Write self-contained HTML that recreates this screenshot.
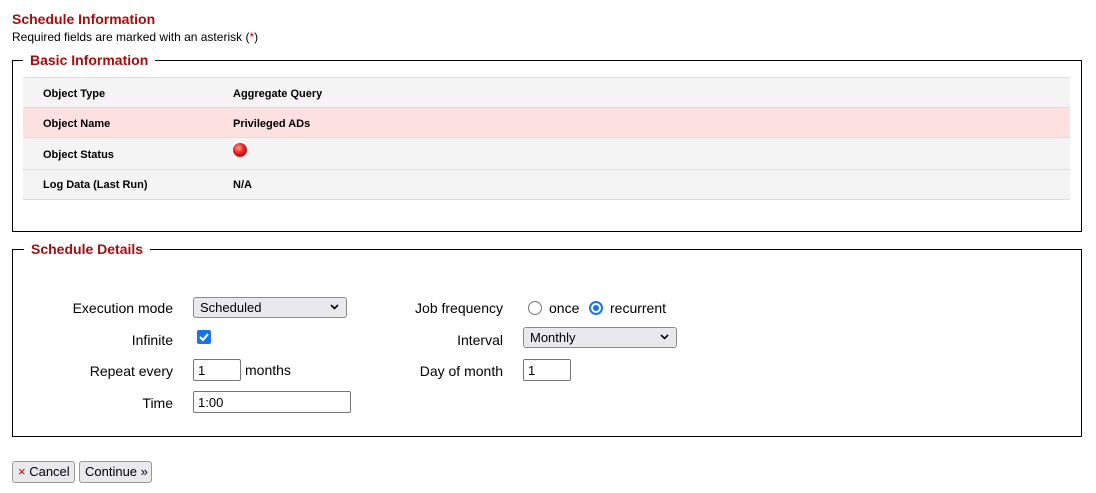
<!DOCTYPE html>
<html><head><meta charset="utf-8"><style>
*{box-sizing:border-box}
body{margin:0;width:1096px;height:493px;background:#fff;font-family:"Liberation Sans",Arial,sans-serif;color:#000;position:relative;overflow:hidden}
.a{position:absolute;white-space:nowrap}
.fs{position:absolute;border:1px solid #000;left:12px;width:1070px}
.lg{position:absolute;background:#fff;color:#a50d0d;font-weight:bold;font-size:14px;padding:0 7px;top:-10px;line-height:18px}
.row{position:absolute;left:23px;width:1047px;border-bottom:1px solid #ddd;font-size:11px;font-weight:bold}
.row span{position:absolute}
.lab{position:absolute;font-size:14px;text-align:right;width:200px}
.sel{position:absolute;height:21px;border:1px solid #8a8a8a;border-radius:3px;background:#e9e9ed;font-size:13px;padding:2px 6px;line-height:15px}
.sel svg{position:absolute;right:7px;top:6px}
.inp{position:absolute;height:22px;border:1px solid #767676;border-radius:2px;background:#fff;font-size:13px;padding:3px 4px;line-height:15px}
.btn{position:absolute;top:461px;height:22px;border:1px solid #999;border-radius:3px;background:#e9e9ed;font-size:13px;line-height:20px;padding:0 5px;white-space:nowrap}
</style></head><body>
<div class="a" style="left:12px;top:11px;font-size:14px;font-weight:bold;color:#a50d0d">Schedule Information</div>
<div class="a" style="left:12px;top:30px;font-size:12px">Required fields are marked with an asterisk (<span style="color:#a50d0d">*</span>)</div>

<div class="fs" style="top:60px;height:172px">
<div class="lg" style="left:10px">Basic Information</div>
</div>
<div class="row" style="top:77px;height:31px;background:#f4f4f4;border-top:1px solid #ddd"><span style="left:20px;top:10px">Object Type</span><span style="left:210px;top:10px">Aggregate Query</span></div>
<div class="row" style="top:108px;height:30px;background:#fde0e0"><span style="left:20px;top:10px">Object Name</span><span style="left:210px;top:10px">Privileged ADs</span></div>
<div class="row" style="top:138px;height:32px;background:#f4f4f4"><span style="left:20px;top:11px">Object Status</span><span style="left:210px;top:5px;width:14px;height:14px;border-radius:50%;background:radial-gradient(circle at 40% 35%,#ff9a8a 0,#e02020 45%,#900 100%)"></span></div>
<div class="row" style="top:170px;height:30px;background:#f4f4f4"><span style="left:20px;top:9px">Log Data (Last Run)</span><span style="left:210px;top:9px">N/A</span></div>

<div class="fs" style="top:249px;height:188px">
<div class="lg" style="left:11px">Schedule Details</div>
</div>

<div class="lab" style="left:-27px;top:300px">Execution mode</div>
<div class="sel" style="left:193px;top:297px;width:154px">Scheduled<svg width="9" height="6"><path d="M1 1l3.5 3.5L8 1" stroke="#000" stroke-width="1.6" fill="none"/></svg></div>
<div class="lab" style="left:-27px;top:332px">Infinite</div>
<div class="a" style="left:197px;top:330px;width:14px;height:14px;background:#1a73e8;border-radius:2px"><svg width="14" height="14"><path d="M3 7l3 3 5-6" stroke="#fff" stroke-width="2" fill="none"/></svg></div>
<div class="lab" style="left:-27px;top:363px">Repeat every</div>
<div class="inp" style="left:193px;top:359px;width:48px">1</div>
<div class="a" style="left:245px;top:362px;font-size:14px">months</div>
<div class="lab" style="left:-27px;top:395px">Time</div>
<div class="inp" style="left:193px;top:391px;width:158px">1:00</div>

<div class="lab" style="left:303px;top:300px">Job frequency</div>
<div class="a" style="left:528px;top:301px;width:14px;height:14px;border:1.5px solid #767676;border-radius:50%"></div>
<div class="a" style="left:549px;top:300px;font-size:14px">once</div>
<div class="a" style="left:589px;top:301px;width:14px;height:14px;border:2px solid #1a73e8;border-radius:50%"><div style="margin:2px;width:6px;height:6px;border-radius:50%;background:#1a73e8"></div></div>
<div class="a" style="left:610px;top:300px;font-size:14px">recurrent</div>
<div class="lab" style="left:303px;top:332px">Interval</div>
<div class="sel" style="left:523px;top:327px;width:154px">Monthly<svg width="9" height="6"><path d="M1 1l3.5 3.5L8 1" stroke="#000" stroke-width="1.6" fill="none"/></svg></div>
<div class="lab" style="left:303px;top:363px">Day of month</div>
<div class="inp" style="left:523px;top:359px;width:48px">1</div>

<div class="btn" style="left:12px;width:63px"><span style="color:#a50d0d">×</span> Cancel</div>
<div class="btn" style="left:79px;width:73px">Continue »</div>
</body></html>
